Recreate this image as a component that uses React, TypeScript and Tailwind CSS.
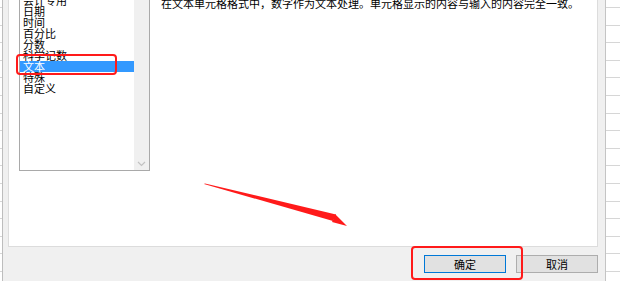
const items = ['会计专用', '日期', '时间', '百分比', '分数', '科学记数', '文本', '特殊', '自定义'];

const grid =
  'bg-[repeating-linear-gradient(to_bottom,#ffffff_0px,#ffffff_7px,#d6d6d6_7px,#d6d6d6_8px,#ffffff_8px,#ffffff_17.6px)]';

export default function App() {
  return (
    <div
      className="relative flex h-[281px] w-[620px] overflow-hidden bg-white text-[11px] leading-[11px] text-black"
      style={{ fontFamily: '"Noto Sans CJK SC", "Microsoft YaHei", sans-serif' }}
    >
      {/* sheet behind the dialog */}
      <div className={`w-[3px] shrink-0 border-r border-[#bdbdbd] ${grid}`} />

      {/* dialog */}
      <div className="flex w-[603px] shrink-0 flex-col border-r border-[#c4c4c4] bg-[#f0f0f0]">
        <div className="ml-[5px] mr-[7px] flex h-[247px] border-x border-b border-[#dcdcdc] bg-white">
          {/* category list */}
          <div className="ml-[10px] flex h-[171px] w-[131px] shrink-0 border-x border-b border-[#a9a9a9]">
            <div className="flex-1 overflow-hidden">
              <ul className="-mt-[5px]">
                {items.map((item) => (
                  <li
                    key={item}
                    className={`h-[11px] whitespace-nowrap pl-[3px] leading-[11px] ${
                      item === '文本' ? 'bg-[#3399ff] text-white' : ''
                    }`}
                  >
                    {item}
                  </li>
                ))}
              </ul>
            </div>
            <div className="flex w-[15px] flex-col justify-end items-center bg-[#f0f0f0] pb-[3px]">
              <svg width="9" height="6" viewBox="0 0 9 6" fill="none">
                <path d="M1 1l3.5 3.5L8 1" stroke="#c2c2c2" strokeWidth="1.2" />
              </svg>
            </div>
          </div>

          {/* description */}
          <p className="ml-[11px] -mt-[3px] whitespace-nowrap leading-[12px]">
            在文本单元格格式中，数字作为文本处理。单元格显示的内容与输入的内容完全一致。
          </p>
        </div>

        {/* buttons */}
        <div className="mt-[8px] flex justify-end gap-[10px] pr-[7px]">
          <button className="flex h-[18px] w-[82px] items-center justify-center border border-[#0078d7] bg-[#e1e1e1] text-[11px]">
            确定
          </button>
          <button className="flex h-[18px] w-[82px] items-center justify-center border border-[#adadad] bg-[#e1e1e1] text-[11px]">
            取消
          </button>
        </div>
      </div>

      <div className={`flex-1 ${grid}`} />

      {/* annotations */}
      <div className="absolute left-[16px] top-[54px] h-[21px] w-[101px] rounded-[4px] border-2 border-[#ff1a1a]" />
      <div className="absolute left-[411px] top-[246px] h-[34px] w-[112px] rounded-[4px] border-2 border-[#ff1a1a]" />
      <svg className="absolute left-0 top-0" width="620" height="281" viewBox="0 0 620 281">
        <polygon points="204,184 334,218 332,222 347,226 335,214 334,217" fill="#ff1a1a" />
        <polygon points="204,184 205,183.5 336,214.5 333,221" fill="#ff1a1a" />
      </svg>
    </div>
  );
}
